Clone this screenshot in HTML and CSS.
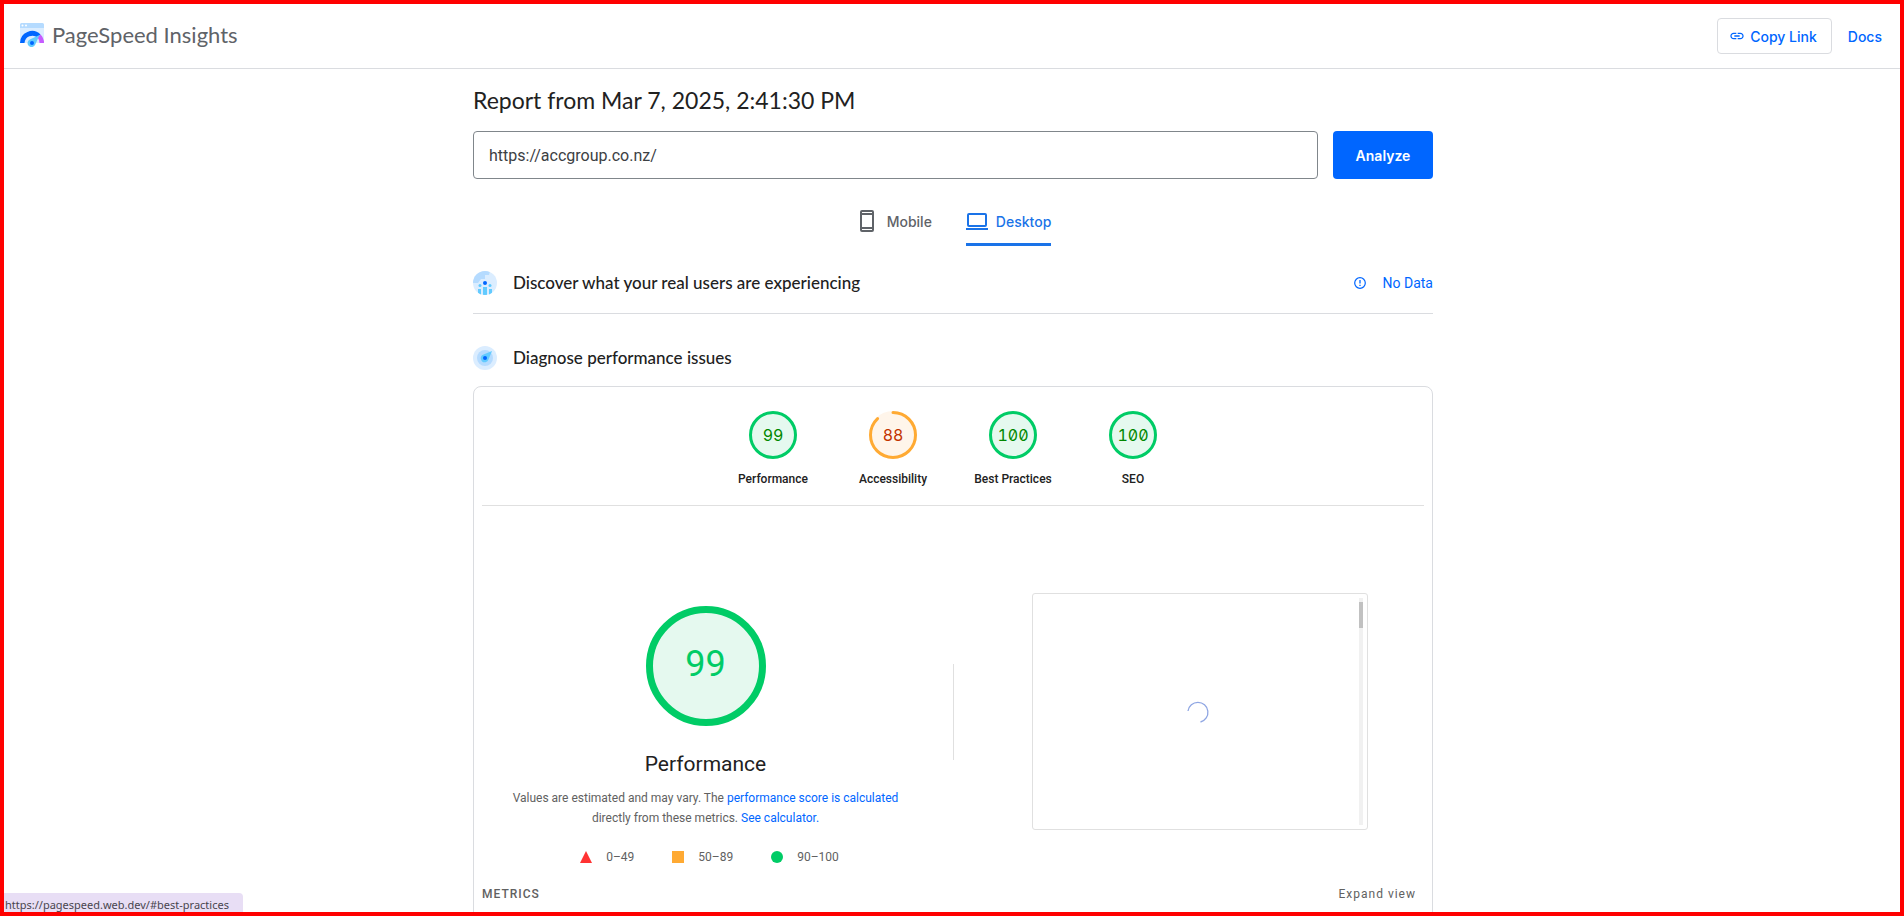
FILE: index.html
```html
<!DOCTYPE html>
<html lang="en">
<head>
<meta charset="utf-8">
<title>PageSpeed Insights</title>
<link rel="stylesheet" href="styles.css">
</head>
<body>
<div class="app">
  <header class="topbar">
    <a class="brand" href="#home">
      <svg width="24" height="24" viewBox="0 0 24 24" aria-hidden="true">
        <path d="M0 5h24v15H0z" fill="#dbedff"/>
        <path d="M1.500 0h21A1.500 1.500 0 0 1 24 1.500V5H0V1.500A1.500 1.500 0 0 1 1.500 0z" fill="#b5dbff"/>
        <circle cx="2.500" cy="2.500" r="1" fill="#fff"/><circle cx="6" cy="2.500" r="1" fill="#fff"/>
        <path d="M0 20a12 12 0 0 1 20.500-8.500l-3 3A8 8 0 0 0 4.500 20z" fill="#0066ff"/>
        <path d="M20.500 11.500A12 12 0 0 1 24 20h-4.500a8 8 0 0 0-2-5.500z" fill="#c65cff"/>
        <path d="M19.500 12l-4.200 9.500a4 4 0 1 1-5.500-5z" fill="#62cbff"/>
        <circle cx="12" cy="20" r="2" fill="#0066ff"/>
      </svg>
      <span>PageSpeed Insights</span>
    </a>
    <nav class="top-actions">
      <button class="copy" type="button">
        <svg width="16" height="16" viewBox="0 0 24 24" aria-hidden="true"><path fill="currentColor" d="M3.900 12c0-1.710 1.390-3.100 3.100-3.100h4V7H7c-2.760 0-5 2.240-5 5s2.240 5 5 5h4v-1.900H7c-1.710 0-3.100-1.390-3.100-3.100zM8 13h8v-2H8v2zm9-6h-4v1.900h4c1.710 0 3.100 1.390 3.100 3.100s-1.390 3.100-3.100 3.100h-4V17h4c2.760 0 5-2.240 5-5s-2.240-5-5-5z"/></svg>
        Copy Link
      </button>
      <a class="docs" href="#docs">Docs</a>
    </nav>
  </header>

  <main class="report">
    <h1 class="report-title">Report from Mar 7, 2025, 2:41:30&#8239;PM</h1>
    <form class="search">
      <input class="url" type="text" aria-label="Enter a web page URL" value="https://accgroup.co.nz/">
      <button class="analyze" type="button">Analyze</button>
    </form>

    <div class="tabs" role="tablist">
      <button class="tab" type="button" role="tab" aria-selected="false">
        <svg width="24" height="24" viewBox="0 0 24 24" aria-hidden="true"><path fill="currentColor" fill-rule="evenodd" d="M7 1h10a2 2 0 0 1 2 2v18a2 2 0 0 1-2 2H7a2 2 0 0 1-2-2V3a2 2 0 0 1 2-2zm0 2v1h10V3zm0 3v12h10V6zm0 14v1h10v-1z"/></svg>
        Mobile
      </button>
      <button class="tab tab-active" type="button" role="tab" aria-selected="true">
        <svg width="22" height="24" viewBox="0 0 22 24" aria-hidden="true"><path fill="currentColor" fill-rule="evenodd" d="M3 4h16a2 2 0 0 1 2 2v10a2 2 0 0 1-2 2H3a2 2 0 0 1-2-2V6a2 2 0 0 1 2-2zm0 2v10h16V6zM0 19h22v2H0z"/></svg>
        Desktop
      </button>
    </div>

    <section class="section-row section-users">
      <svg width="24" height="24" viewBox="0 0 24 24" aria-hidden="true">
        <defs><clipPath id="disc"><circle cx="12" cy="12" r="12"/></clipPath></defs>
        <g clip-path="url(#disc)">
          <path d="M0 0h24v24H0z" fill="#dbedff"/>
          <path d="M0 0h17l-1 4h-4v4H8l-3 4H0z" fill="#b5dbff"/>
          <g fill="#62cbff"><circle cx="7" cy="14.500" r="1.500"/><circle cx="17" cy="14.500" r="1.500"/><path d="M10 16h4v8h-4zM5 18h3v6H5zM16 18h3v6h-3z"/></g>
          <circle cx="12" cy="12" r="2" fill="#0066ff"/>
        </g>
      </svg>
      <h2 class="section-title">Discover what your real users are experiencing</h2>
      <a class="no-data" href="#no-data">
        <svg width="14" height="14" viewBox="0 0 14 14" aria-hidden="true"><circle cx="7" cy="7" r="5.300" fill="none" stroke="currentColor" stroke-width="1.200"/><path d="M7 4v3.500M7 8.800V10" stroke="currentColor" stroke-width="1.300"/></svg>
        No Data
      </a>
    </section>

    <section class="section-row">
      <svg width="24" height="24" viewBox="0 0 24 24" aria-hidden="true">
        <circle cx="12" cy="12" r="12" fill="#dbedff"/>
        <circle cx="12" cy="12" r="8" fill="#b5dbff"/>
        <path d="M19 5l-3.500 8.500A4 4 0 1 1 10.500 8.500z" fill="#62cbff"/>
        <circle cx="12" cy="12" r="2" fill="#0066ff"/>
      </svg>
      <h2 class="section-title">Diagnose performance issues</h2>
    </section>

    <article class="card">
      <nav class="gauges">
        <a class="gauge good" href="#performance">
          <svg width="48" height="48" viewBox="0 0 48 48" aria-hidden="true"><circle class="disc" cx="24" cy="24" r="24"/><circle class="arc" cx="24" cy="24" r="22.500"/></svg>
          <span class="score">99</span><span>Performance</span>
        </a>
        <a class="gauge average" href="#accessibility">
          <svg width="48" height="48" viewBox="0 0 48 48" aria-hidden="true"><circle class="disc" cx="24" cy="24" r="24"/><circle class="arc arc-part" cx="24" cy="24" r="22.500" pathLength="100"/></svg>
          <span class="score">88</span><span>Accessibility</span>
        </a>
        <a class="gauge good" href="#best-practices">
          <svg width="48" height="48" viewBox="0 0 48 48" aria-hidden="true"><circle class="disc" cx="24" cy="24" r="24"/><circle class="arc" cx="24" cy="24" r="22.500"/></svg>
          <span class="score">100</span><span>Best Practices</span>
        </a>
        <a class="gauge good" href="#seo">
          <svg width="48" height="48" viewBox="0 0 48 48" aria-hidden="true"><circle class="disc" cx="24" cy="24" r="24"/><circle class="arc" cx="24" cy="24" r="22.500"/></svg>
          <span class="score">100</span><span>SEO</span>
        </a>
      </nav>

      <div class="overview">
        <div class="summary">
          <div class="big-gauge">99</div>
          <h3 class="category">Performance</h3>
          <p class="note">Values are estimated and may vary. The <a href="#scoring">performance score is calculated</a> directly from these metrics. <a href="#calculator">See calculator.</a></p>
          <ul class="legend">
            <li><svg width="12" height="12" viewBox="0 0 12 12" aria-hidden="true"><path d="M6 0l6 12H0z" fill="#ff3333"/></svg>0–49</li>
            <li><svg width="12" height="12" viewBox="0 0 12 12" aria-hidden="true"><path d="M0 0h12v12H0z" fill="#ffaa33"/></svg>50–89</li>
            <li><svg width="12" height="12" viewBox="0 0 12 12" aria-hidden="true"><circle cx="6" cy="6" r="6" fill="#00cc66"/></svg>90–100</li>
          </ul>
        </div>
        <div class="preview-side">
          <div class="preview">
            <svg class="spinner" width="24" height="24" viewBox="0 0 24 24" aria-hidden="true"><path d="M2 11a10 10 0 1 1 12.500 11" fill="none" stroke="#8fa6e3" stroke-width="1.300"/></svg>
            <div class="track"><div class="thumb"></div></div>
          </div>
        </div>
      </div>

      <div class="metrics-head">
        <h3 class="metrics-title">Metrics</h3>
        <button class="expand" type="button">Expand view</button>
      </div>
    </article>
  </main>
  <div class="status">https://pagespeed.web.dev/#best-practices</div>
</div>
</body>
</html>
```
FILE: styles.css
```css
* { box-sizing: border-box; }
body { margin: 0; background: #fff; color: #212121; font-family: Roboto, "Liberation Sans", sans-serif; }
h1, h2, h3, p, ul { margin: 0; padding: 0; }
a { color: #0066ff; text-decoration: none; }
button { font: inherit; border: 0; background: none; padding: 0; cursor: pointer; }
svg { display: block; flex: none; }

.app { position: relative; height: 100vh; overflow: hidden; border: 4px solid #ff0000; }

.topbar { display: flex; align-items: center; justify-content: space-between; height: 65px; padding: 0 18px 0 16px; border-bottom: 1px solid #dadce0; }
.brand { display: flex; align-items: center; gap: 8px; color: #5f6368; font-family: Lato, sans-serif; font-size: 22px; line-height: 32px; padding-bottom: 2px; }
.top-actions { display: flex; align-items: center; gap: 16px; font-family: Inter, sans-serif; font-size: 14px; font-weight: 500; }
.copy { display: flex; align-items: center; gap: 5px; height: 36px; padding: 0 14px 0 11px; border: 1px solid #dadce0; border-radius: 4px; color: #0066ff; }

.report { max-width: 962px; margin: 0 auto; padding-left: 2px; }
.report-title { padding: 15px 0; font-family: Lato, sans-serif; font-size: 23px; font-weight: 400; line-height: 32px; }
.search { display: flex; gap: 15px; }
.url { flex: 1; height: 48px; padding: 0 15px; border: 1px solid #80868b; border-radius: 4px; background: #fff; color: #3c4043; font: 16px Roboto, sans-serif; }
.analyze { width: 100px; height: 48px; border-radius: 4px; background: #0066ff; color: #fff; font-family: Inter, sans-serif; font-size: 14px; font-weight: 600; }

.tabs { display: flex; justify-content: center; gap: 34px; margin-top: 18px; }
.tab { display: flex; align-items: center; gap: 8px; height: 49px; padding-top: 2px; border-bottom: 3px solid transparent; color: #5f6368; font-family: Inter, sans-serif; font-size: 14px; font-weight: 500; }
.tab-active { color: #1a73e8; border-color: #1a73e8; border-radius: 2px 2px 0 0; }

.section-row { display: flex; align-items: center; gap: 16px; height: 56px; margin-top: 16px; }
.section-users { height: 61px; margin-top: 7px; border-bottom: 1px solid #dadce0; }
.section-title { flex: 1; font-family: Lato, sans-serif; font-size: 17px; font-weight: 500; line-height: 24px; }
.no-data { display: flex; align-items: center; gap: 16px; font-size: 14px; }

.card { border: 1px solid #dadce0; border-radius: 8px; height: 640px; padding: 0 8px; }
.gauges { display: flex; justify-content: center; padding: 24px 0 18px; border-bottom: 1px solid #e0e0e0; }
.gauge { position: relative; display: flex; flex-direction: column; align-items: center; gap: 12px; width: 120px; color: #212121; font-size: 12px; font-weight: 500; line-height: 16px; }
.gauge svg { transform: rotate(-90deg); }
.arc { fill: none; stroke-width: 3; stroke: #00cc66; }
.disc { fill: #e5f9ef; }
.average .disc { fill: #fff5ea; }
.average .arc { stroke: #ffaa33; }
.arc-part { stroke-dasharray: 88 100; stroke-linecap: round; }
.score { position: absolute; top: 0; line-height: 48px; font-family: Inter, monospace; font-size: 16px; font-weight: 400; font-feature-settings: "zero", "tnum"; color: #008800; }
.average .score { color: #c33300; }

.overview { display: grid; grid-template-columns: 1fr 1fr; margin-top: 72px; }
.summary { display: flex; flex-direction: column; align-items: center; padding: 28px 46px 0 22px; }
.big-gauge { display: grid; place-items: center; width: 120px; height: 120px; border: 7px solid #00cc66; border-radius: 50%; background: #e5f9ef; color: #00cc66; font-size: 36px; line-height: 40px; padding-bottom: 4px; }
.category { margin-top: 24px; font-size: 21px; font-weight: 400; line-height: 28px; }
.note { max-width: 400px; margin-top: 10px; color: #616161; font-size: 12px; line-height: 20px; text-align: center; }
.legend { display: flex; gap: 38px; margin-top: 20px; padding-left: 8px; list-style: none; color: #616161; font-size: 12px; line-height: 18px; }
.legend li { display: flex; align-items: center; gap: 14px; }

.preview-side { display: grid; place-items: center; position: relative; padding-left: 22px; }
.preview-side::before { content: ""; position: absolute; left: 0; top: 86px; height: 96px; border-left: 1px solid #e0e0e0; }
.preview { position: relative; display: grid; place-items: center; align-self: start; margin-top: 15px; width: 336px; height: 237px; padding-right: 4px; border: 1px solid #e0e0e0; border-radius: 3px; }
.track { position: absolute; top: 4px; right: 4px; bottom: 4px; width: 4px; padding-top: 4px; background: #f1f1f1; }
.thumb { height: 26px; background: #c1c1c1; }

.metrics-head { display: flex; align-items: center; justify-content: space-between; height: 36px; margin-top: 10px; padding-right: 8px; color: #616161; font-size: 12px; }
.metrics-title { font-size: 12px; font-weight: 500; letter-spacing: 1px; text-transform: uppercase; }
.expand { color: #616161; letter-spacing: 1px; }

.status { position: absolute; left: 0; bottom: 0; height: 19px; padding: 0 14px 0 1px; border-radius: 0 4px 0 0; background: #e8def5; color: #48454e; font-family: "Noto Sans", sans-serif; font-size: 11px; line-height: 23px; }
```
